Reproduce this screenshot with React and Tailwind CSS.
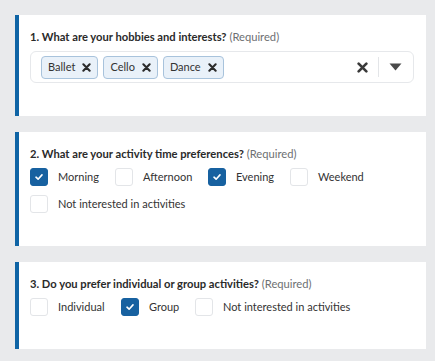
import React from "react";

const Check = () => (
  <svg width="10" height="10" viewBox="0 0 10 10" fill="none">
    <path d="M2 5.2 L4.1 7.2 L8 2.9" stroke="white" strokeWidth="1.6" strokeLinecap="round" strokeLinejoin="round" />
  </svg>
);

const Box = ({ checked, label, w = "" }) => (
  <label className={`flex items-center h-[18px] ${w}`}>
    <span
      className={`w-[18px] h-[18px] rounded-[3px] flex items-center justify-center shrink-0 ${
        checked ? "bg-[#1761a0] border border-[#1761a0]" : "bg-white border border-[#e3e5e8]"
      }`}
    >
      {checked && <Check />}
    </span>
    <span className="ml-[10px] text-[11px] text-[#333] whitespace-nowrap">{label}</span>
  </label>
);

const Cross = ({ size = 9, color = "#333", w = 2.2 }) => (
  <svg width={size} height={size} viewBox="0 0 10 10">
    <path d="M1.5 1.5 L8.5 8.5 M8.5 1.5 L1.5 8.5" stroke={color} strokeWidth={w} strokeLinecap="round" />
  </svg>
);

const Chip = ({ label }) => (
  <div className="h-[23px] flex items-center gap-[7px] pl-[6px] pr-[6px] bg-[#e9f1f9] border border-[#a8c3dc] rounded-[4px] text-[11px] text-[#333]">
    <span>{label}</span>
    <Cross size={9} color="#2b2b2b" w={2.3} />
  </div>
);

const Card = ({ title, children }) => (
  <div className="bg-white border-l-4 border-[#0f64a5] pl-[11px] pr-[12px] pt-[15px] pb-[33px]">
    <div className="text-[11.2px] leading-[14px] text-[#2a2a2a] mb-[7px] whitespace-nowrap">
      <span className="font-bold">{title}</span>{" "}
      <span className="text-[#6d6f72]">(Required)</span>
    </div>
    {children}
  </div>
);

export default function App() {
  return (
    <div
      className="min-h-[361px] bg-[#e9eaec] pl-[15px] pr-[9px] pt-[15px] pb-[11px] flex flex-col gap-[16px]"
      style={{ fontFamily: "Lato, 'Noto Sans', sans-serif" }}
    >
      <Card title="1. What are your hobbies and interests?">
        <div className="h-[32px] border border-[#e6e8eb] rounded-[6px] flex items-center pl-[10px]">
          <div className="flex gap-[5px] flex-1">
            <Chip label="Ballet" />
            <Chip label="Cello" />
            <Chip label="Dance" />
          </div>
          <div className="flex items-center">
            <span className="px-[10px] flex"><Cross size={11} color="#3a3a3a" w={2.4} /></span>
            <span className="w-px h-[20px] bg-[#e3e5e8]" />
            <span className="pl-[10px] pr-[11px] flex">
              <svg width="13" height="8" viewBox="0 0 13 8"><path d="M0.5 0.5 H12.5 L6.5 7.5 Z" fill="#4a4a4a" /></svg>
            </span>
          </div>
        </div>
      </Card>

      <Card title="2. What are your activity time preferences?">
        <div className="flex flex-col gap-[9px]">
          <div className="flex">
            <Box checked label="Morning" w="w-[85px]" />
            <Box label="Afternoon" w="w-[93px]" />
            <Box checked label="Evening" w="w-[82px]" />
            <Box label="Weekend" />
          </div>
          <Box label="Not interested in activities" />
        </div>
      </Card>

      <Card title="3. Do you prefer individual or group activities?">
        <div className="flex">
          <Box label="Individual" w="w-[91px]" />
          <Box checked label="Group" w="w-[74px]" />
          <Box label="Not interested in activities" />
        </div>
      </Card>
    </div>
  );
}
